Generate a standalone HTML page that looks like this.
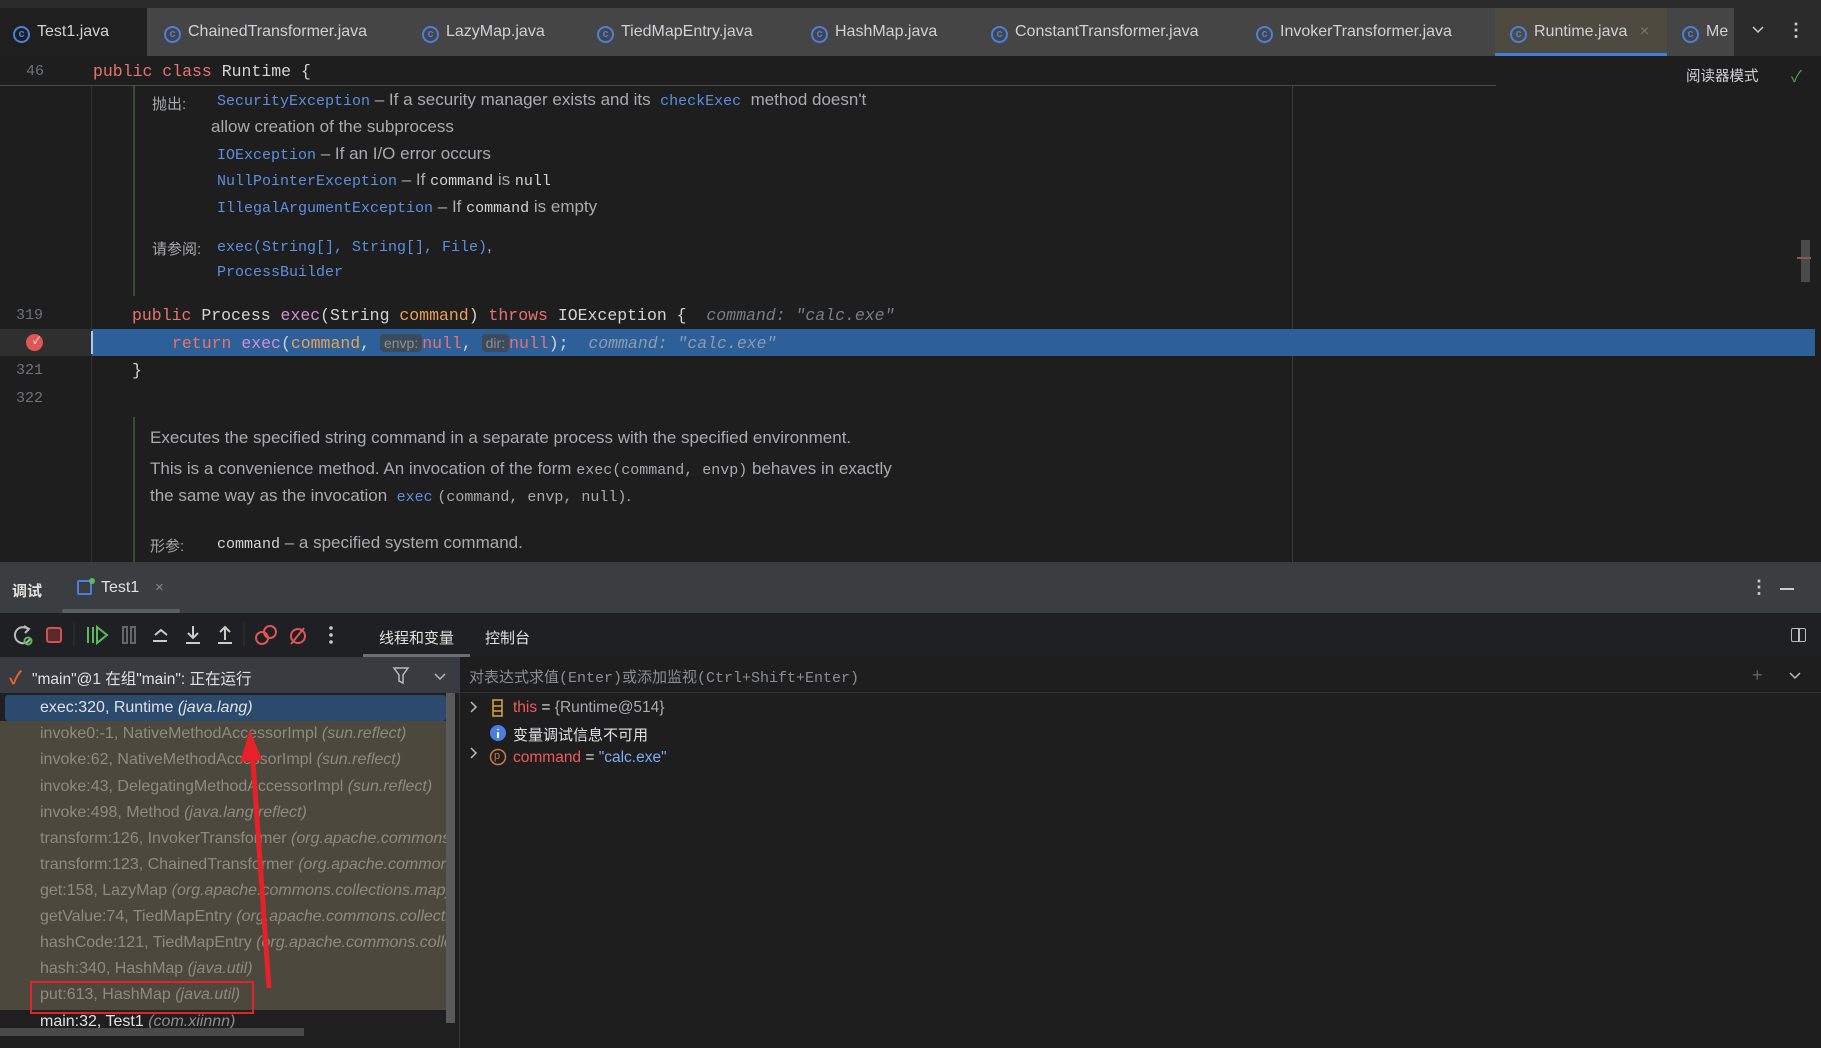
<!DOCTYPE html>
<html><head><meta charset="utf-8"><style>
*{margin:0;padding:0;box-sizing:border-box}
body{width:1821px;height:1048px;overflow:hidden;background:#1e1e1e;position:relative;font-family:"Liberation Sans","Noto Sans CJK SC",sans-serif;color:#bcbec4;font-size:16px}
.a{position:absolute;white-space:nowrap}
.m{font-family:"Liberation Mono","Noto Sans CJK SC",monospace;font-size:16.5px}
.kw{color:#e8736e}.fn{color:#d58fd0}.pr{color:#e9a156}.ln{color:#6f737a;font-family:"Liberation Mono",monospace;font-size:15px}
.lk{color:#5c8fe0;font-family:"Liberation Mono",monospace;font-size:15px}
.cd{color:#d4d4d4;font-family:"Liberation Mono",monospace;font-size:15px}
.hint{color:#7a7e85;font-style:italic}
.dt{color:#a9abaf;font-size:17px}
.tab{position:absolute;top:23px;font-size:16px;color:#cfd1d5;white-space:nowrap}
.ci{display:inline-block;width:17px;height:17px;border:2px solid #4a7fe0;border-radius:50%;font-size:11px;line-height:13px;text-align:center;color:#4a7fe0;vertical-align:-1px;margin-right:7px;font-weight:bold}
.fr{position:absolute;left:40px;font-size:16px;color:#8f8a7e;white-space:nowrap}
.fr i{font-style:italic}
.ih{font-family:"Liberation Sans",sans-serif;font-size:14px;background:#3d4a5a;color:#8a9099;border-radius:4px;padding:1px 4px;font-style:normal}
</style></head><body>
<!-- tab bar -->
<div class="a" style="left:0;top:0;width:1821px;height:56px;background:#454545"></div>
<div class="a" style="left:0;top:0;width:1821px;height:8px;background:#2b2b2b"></div>
<div class="a" style="left:0;top:8px;width:147px;height:48px;background:#1f1f1f"></div>
<div class="a" style="left:1495px;top:8px;width:172px;height:48px;background:#4e4a3f"></div>
<div class="a" style="left:1495px;top:53px;width:172px;height:3px;background:#3f7fd8"></div>
<div class="a" style="left:1734px;top:8px;width:87px;height:48px;background:#2b2b2b"></div>
<div class="tab" style="left:13px"><span class="ci">c</span>Test1.java</div>
<div class="tab" style="left:164px"><span class="ci">c</span>ChainedTransformer.java</div>
<div class="tab" style="left:422px"><span class="ci">c</span>LazyMap.java</div>
<div class="tab" style="left:597px"><span class="ci">c</span>TiedMapEntry.java</div>
<div class="tab" style="left:811px"><span class="ci">c</span>HashMap.java</div>
<div class="tab" style="left:991px"><span class="ci">c</span>ConstantTransformer.java</div>
<div class="tab" style="left:1256px"><span class="ci">c</span>InvokerTransformer.java</div>
<div class="tab" style="left:1510px"><span class="ci">c</span>Runtime.java <span style="color:#777;margin-left:8px">×</span></div>
<div class="tab" style="left:1682px;width:50px;overflow:hidden"><span class="ci">c</span>Me</div>
<svg class="a" style="left:1750px;top:24px" width="16" height="12"><path d="M3 3l5 5 5-5" fill="none" stroke="#ccc" stroke-width="1.5"/></svg>
<div class="a" style="left:1787px;top:20px;color:#ccc;font-size:18px;font-weight:bold">⋮</div>
<!-- sticky line -->
<div class="a" style="left:0;top:85px;width:1496px;height:1px;background:#4a4a4a"></div>
<div class="a ln" style="left:26px;top:63px">46</div>
<div class="a m" style="left:93px;top:62px;color:#d4d4d4"><span class="kw">public class</span> Runtime {</div>
<div class="a" style="left:1686px;top:65px;font-size:14.5px;color:#cfd1d5">阅读器模式</div>
<div class="a" style="left:1791px;top:63px;color:#4fa557;font-size:16px">✓</div>
<!-- gutter line & margins -->
<div class="a" style="left:91px;top:86px;width:1px;height:476px;background:#303030"></div>
<div class="a" style="left:1292px;top:86px;width:1px;height:476px;background:#3a3a3a"></div>
<div class="a" style="left:133px;top:86px;width:2px;height:210px;background:#3b4a38"></div>
<div class="a" style="left:133px;top:417px;width:2px;height:145px;background:#3b4a38"></div>
<div class="a" style="left:1801px;top:240px;width:9px;height:42px;background:#4a4a4a"></div>
<div class="a" style="left:1797px;top:257px;width:14px;height:2px;background:#8a5a4a"></div>
<!-- doc top -->
<div class="a" style="left:152px;top:93px;font-size:15px;color:#a9abaf">抛出:</div>
<div class="a dt" style="left:217px;top:90px"><span class="lk">SecurityException</span> – If a security manager exists and its &nbsp;<span class="lk">checkExec</span>&nbsp; method doesn't</div>
<div class="a dt" style="left:211px;top:117px">allow creation of the subprocess</div>
<div class="a dt" style="left:217px;top:144px"><span class="lk">IOException</span> – If an I/O error occurs</div>
<div class="a dt" style="left:217px;top:170px"><span class="lk">NullPointerException</span> – If <span class="cd">command</span> is <span class="cd">null</span></div>
<div class="a dt" style="left:217px;top:197px"><span class="lk">IllegalArgumentException</span> – If <span class="cd">command</span> is empty</div>
<div class="a" style="left:152px;top:238px;font-size:15px;color:#a9abaf">请参阅:</div>
<div class="a dt" style="left:217px;top:236px"><span class="lk">exec(String[], String[], File)</span>,</div>
<div class="a" style="left:217px;top:263px"><span class="lk">ProcessBuilder</span></div>
<!-- code -->
<div class="a ln" style="left:16px;top:307px">319</div>
<div class="a m" style="left:132px;top:306px;color:#d4d4d4"><span class="kw">public</span> Process <span class="fn">exec</span>(String <span class="pr">command</span>) <span class="kw">throws</span> IOException { &nbsp;<span class="hint">command: "calc.exe"</span></div>
<div class="a" style="left:0;top:329px;width:91px;height:27px;background:#2f2f2f"></div>
<div class="a" style="left:92px;top:329px;width:1723px;height:27px;background:#2d5f99"></div>
<div class="a" style="left:91px;top:331px;width:2px;height:23px;background:#a8c8f0"></div>
<div class="a" style="left:26px;top:334px;width:17px;height:17px;border-radius:50%;background:#e05555"></div>
<div class="a" style="left:33px;top:332px;color:#fff;font-size:10px">✓</div>
<div class="a m" style="left:172px;top:334px;color:#d4d4d4"><span class="kw">return</span> <span class="fn">exec</span>(<span class="pr">command</span>, <span class="ih">envp:</span><span class="kw">null</span>, <span class="ih">dir:</span><span class="kw">null</span>); &nbsp;<span class="hint" style="color:#8e9cb0">command: "calc.exe"</span></div>
<div class="a ln" style="left:16px;top:362px">321</div>
<div class="a m" style="left:132px;top:361px;color:#d4d4d4">}</div>
<div class="a ln" style="left:16px;top:390px">322</div>
<!-- doc bottom -->
<div class="a dt" style="left:150px;top:428px">Executes the specified string command in a separate process with the specified environment.</div>
<div class="a dt" style="left:150px;top:459px">This is a convenience method. An invocation of the form <span class="cd" style="color:#a9abaf">exec(command, envp)</span> behaves in exactly</div>
<div class="a dt" style="left:150px;top:486px">the same way as the invocation &nbsp;<span class="lk">exec</span> <span class="cd" style="color:#a9abaf">(command, envp, null)</span>.</div>
<div class="a" style="left:150px;top:535px;font-size:15px;color:#a9abaf">形参:</div>
<div class="a dt" style="left:217px;top:533px"><span class="cd">command</span> – a specified system command.</div>
<!-- debug header -->
<div class="a" style="left:0;top:562px;width:1821px;height:51px;background:#3b3e41"></div>
<div class="a" style="left:12px;top:580px;font-size:15px;color:#e0e0e0;font-weight:bold">调试</div>
<div class="a" style="left:77px;top:580px;width:15px;height:15px;border:2px solid #4a7fe0;border-radius:2px"></div>
<div class="a" style="left:89px;top:578px;width:6px;height:6px;border-radius:50%;background:#5fb85f"></div>
<div class="a" style="left:101px;top:579px;font-size:16px;color:#dfe1e5">Test1</div>
<div class="a" style="left:155px;top:579px;font-size:15px;color:#888">×</div>
<div class="a" style="left:62px;top:609px;width:118px;height:4px;background:#5a5d61;border-radius:2px"></div>
<div class="a" style="left:1750px;top:577px;color:#ccc;font-size:18px;font-weight:bold">⋮</div>
<div class="a" style="left:1780px;top:588px;width:14px;height:2px;background:#ccc"></div>
<!-- toolbar -->
<div class="a" style="left:0;top:613px;width:1821px;height:44px;background:#1f2023"></div>
<svg class="a" style="left:0;top:613px" width="360" height="44">
<g fill="none" stroke-width="2">
<path d="M28 16 A8 8 0 1 0 30 26" stroke="#bbb"/><path d="M24 13 l5 3 -4 4" stroke="#bbb"/>
<circle cx="28" cy="28" r="3.5" stroke="#5fb85f"/>
<rect x="47" y="15" width="14" height="14" rx="2" fill="#5a2a2a" stroke="#d25252"/>
<path d="M88 14 v16 M93 14 v16 M97 14 l10 8 -10 8z" stroke="#5fb85f"/>
<path d="M123 14 h4 v16 h-4z M131 14 h4 v16 h-4z" stroke="#666"/>
<path d="M153 28 h14 M155 22 l6-5 6 5" stroke="#ccc"/>
<path d="M186 30 h14 M193 13 v12 M188 20 l5 5 5-5" stroke="#ccc"/>
<path d="M218 30 h14 M225 27 v-13 M220 19 l5-5 5 5" stroke="#ccc"/>
<circle cx="262" cy="25" r="6" stroke="#e05555"/><circle cx="270" cy="19" r="6" stroke="#e05555"/>
<circle cx="298" cy="23" r="7" stroke="#e05555"/><path d="M291 31 l13-16" stroke="#e05555"/>
</g>
<circle cx="331" cy="15" r="1.8" fill="#ccc"/><circle cx="331" cy="22" r="1.8" fill="#ccc"/><circle cx="331" cy="29" r="1.8" fill="#ccc"/>
<path d="M74 10 v24 M244 10 v24" stroke="#333" stroke-width="1"/>
</svg>
<div class="a" style="left:379px;top:627px;font-size:15px;color:#e0e0e0">线程和变量</div>
<div class="a" style="left:485px;top:627px;font-size:15px;color:#e0e0e0">控制台</div>
<div class="a" style="left:363px;top:654px;width:107px;height:3px;background:#6b6e73"></div>
<div class="a" style="left:1791px;top:628px;width:15px;height:14px;border:1.5px solid #bbb;border-radius:2px"></div>
<div class="a" style="left:1798px;top:628px;width:1.5px;height:14px;background:#bbb"></div>
<!-- frames header -->
<div class="a" style="left:0;top:657px;width:459px;height:36px;background:#393b40"></div>
<div class="a" style="left:459px;top:657px;width:1px;height:391px;background:#3a3a3a"></div>
<div class="a" style="left:460px;top:692px;width:1361px;height:1px;background:#333"></div>
<div class="a" style="left:9px;top:664px;color:#e0662a;font-size:18px;font-weight:bold">✓</div>
<div class="a" style="left:32px;top:667px;font-size:15.5px;color:#dfe1e5">"main"@1 在组"main": 正在运行</div>
<svg class="a" style="left:392px;top:666px" width="60" height="20"><path d="M2 2h14l-5 7v8l-4-2v-6z" fill="none" stroke="#bbb" stroke-width="1.5"/><path d="M43 8l5 5 5-5" fill="none" stroke="#bbb" stroke-width="1.5"/></svg>
<div class="a" style="left:469px;top:666px;font-size:15px;color:#8a8d92;font-family:'Liberation Mono','Noto Sans CJK SC',monospace">对表达式求值(Enter)或添加监视(Ctrl+Shift+Enter)</div>
<div class="a" style="left:1752px;top:665px;color:#666;font-size:18px">+</div>
<svg class="a" style="left:1787px;top:670px" width="16" height="12"><path d="M3 3l5 5 5-5" fill="none" stroke="#bbb" stroke-width="1.5"/></svg>
<!-- frames list -->
<div class="a" style="left:0;top:693px;width:459px;height:355px;background:#1f1f1f"></div>
<div class="a" style="left:0;top:721px;width:446px;height:289px;background:#4d483d"></div>
<div class="a" style="left:5px;top:695px;width:441px;height:26px;background:#2b4a6e;border-radius:3px"></div>
<div class="a" style="left:446px;top:693px;width:9px;height:330px;background:#5a5a5a"></div>
<div class="fr" style="top:699px;color:#dfe1e5">exec:320, Runtime <i>(java.lang)</i></div>
<div class="fr" style="top:725px">invoke0:-1, NativeMethodAccessorImpl <i>(sun.reflect)</i></div>
<div class="fr" style="top:751px">invoke:62, NativeMethodAccessorImpl <i>(sun.reflect)</i></div>
<div class="fr" style="top:778px;width:406px;overflow:hidden">invoke:43, DelegatingMethodAccessorImpl <i>(sun.reflect)</i></div>
<div class="fr" style="top:804px">invoke:498, Method <i>(java.lang.reflect)</i></div>
<div class="fr" style="top:830px;width:406px;overflow:hidden">transform:126, InvokerTransformer <i>(org.apache.commons.collections)</i></div>
<div class="fr" style="top:856px;width:406px;overflow:hidden">transform:123, ChainedTransformer <i>(org.apache.commons.collections)</i></div>
<div class="fr" style="top:882px;width:406px;overflow:hidden">get:158, LazyMap <i>(org.apache.commons.collections.map)</i></div>
<div class="fr" style="top:908px;width:406px;overflow:hidden">getValue:74, TiedMapEntry <i>(org.apache.commons.collections)</i></div>
<div class="fr" style="top:934px;width:406px;overflow:hidden">hashCode:121, TiedMapEntry <i>(org.apache.commons.collections)</i></div>
<div class="fr" style="top:960px">hash:340, HashMap <i>(java.util)</i></div>
<div class="fr" style="top:986px">put:613, HashMap <i>(java.util)</i></div>
<div class="fr" style="top:1013px;color:#dfe1e5">main:32, Test1 <i style="color:#8a8d92">(com.xiinnn)</i></div>
<div class="a" style="left:0;top:1028px;width:304px;height:8px;background:#4a4a4a"></div>
<div class="a" style="left:30px;top:981px;width:224px;height:33px;border:2px solid #e0242a"></div>
<svg class="a" style="left:230px;top:720px" width="60" height="280"><path d="M39 268 L22 28" stroke="#e8202a" stroke-width="5" fill="none"/><path d="M20 10 L10 42 L32 40z" fill="#e8202a"/></svg>
<!-- variables -->
<svg class="a" style="left:467px;top:698px" width="40" height="72"><path d="M4 4l5 5-5 5M4 50l5 5-5 5" fill="none" stroke="#bbb" stroke-width="1.5"/>
<rect x="26" y="2" width="9" height="16" fill="none" stroke="#d9a53a" stroke-width="1.5"/><path d="M26 8h9M26 13h9" stroke="#d9a53a" stroke-width="1.5"/>
<circle cx="31" cy="35" r="8" fill="#4a7fe0"/><path d="M31 31v1M31 34v6" stroke="#fff" stroke-width="2"/>
<circle cx="31" cy="59" r="7.5" fill="none" stroke="#c77a4a" stroke-width="1.5"/></svg>
<div class="a" style="left:494px;top:750px;font-size:11px;color:#c77a4a">p</div>
<div class="a" style="left:513px;top:699px;font-size:15.5px;color:#dfe1e5"><span style="color:#ee5b5b">this</span> = <span style="color:#a9abaf">{Runtime@514}</span></div>
<div class="a" style="left:513px;top:724px;font-size:15px;color:#dfe1e5">变量调试信息不可用</div>
<div class="a" style="left:513px;top:749px;font-size:15.5px;color:#dfe1e5"><span style="color:#ee5b5b">command</span> = <span style="color:#7aaef0">"calc.exe"</span></div>
</body></html>
